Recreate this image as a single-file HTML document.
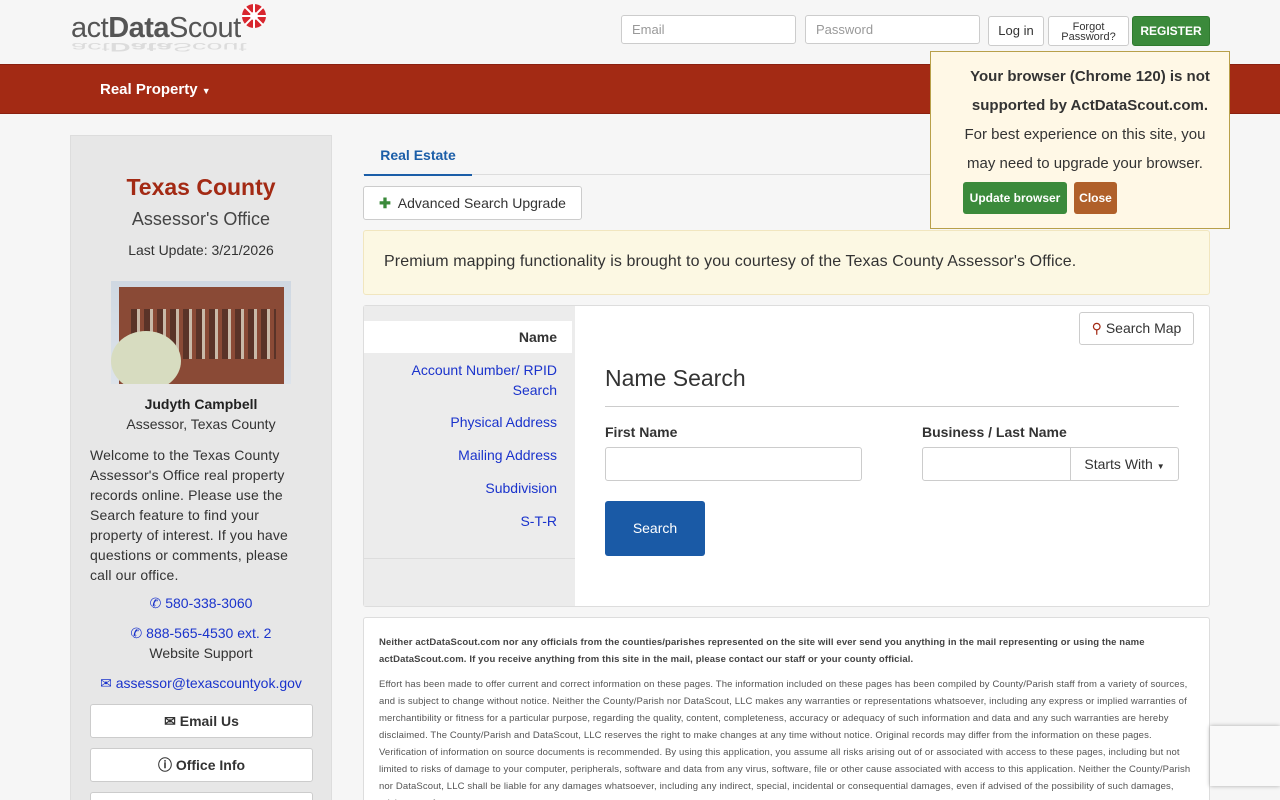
<!DOCTYPE html>
<html><head><meta charset="utf-8"><style>
*{box-sizing:border-box}
html,body{margin:0;width:1280px;height:800px;overflow:hidden}
body{background:#f6f6f6;font-family:"Liberation Sans",sans-serif;color:#333;font-size:14px;position:relative}
.abs{position:absolute}
input.f{position:absolute;height:29px;border:1px solid #ccc;border-radius:3px;background:#fff;font-size:13px;color:#999;padding:0 10px;line-height:27px}
.btn{position:absolute;border:1px solid #ccc;border-radius:3px;background:#fff;text-align:center;font-size:13px;color:#333}
a{color:#1a33cc;text-decoration:none}
</style></head><body>
<!-- logo -->
<div class="abs" style="left:71px;top:30px;font-size:29px;color:#ccc;transform:scaleY(-0.4);opacity:.6;line-height:33px">act<b>Data</b>Scout</div>
<div class="abs" style="left:71px;top:12px;font-size:29px;color:#555;letter-spacing:-0.5px;line-height:33px">act<b style="color:#555">Data</b>Scout</div>
<svg class="abs" style="left:240px;top:2px" width="28" height="28" viewBox="0 0 28 28"><g fill="#d8262e"><circle cx="14" cy="14" r="12"/></g><g stroke="#fff" stroke-width="2"><line x1="14" y1="2" x2="14" y2="26"/><line x1="2" y1="14" x2="26" y2="14"/><line x1="5" y1="5" x2="23" y2="23"/><line x1="23" y1="5" x2="5" y2="23"/></g><circle cx="14" cy="14" r="4" fill="#fff"/></svg>
<input class="f" style="left:621px;top:15px;width:175px" value="Email">
<input class="f" style="left:805px;top:15px;width:175px" value="Password">
<div class="btn" style="left:988px;top:16px;width:56px;height:30px;line-height:28px">Log in</div>
<div class="btn" style="left:1048px;top:16px;width:81px;height:30px;font-size:11px;line-height:10px;padding-top:5px">Forgot<br>Password?</div>
<div class="btn" style="left:1132px;top:16px;width:78px;height:30px;line-height:28px;background:#3b8a3b;border-color:#2f7a2f;color:#fff;font-weight:bold;font-size:12px">REGISTER</div>
<!-- navbar -->
<div class="abs" style="left:0;top:64px;width:1280px;height:50px;background:#a32a14;border-top:1px solid #8a2010;border-bottom:1px solid #8a2010"></div>
<div class="abs" style="left:100px;top:81px;color:#fff;font-weight:bold;font-size:15px">Real Property <span style="font-size:9px">▼</span></div>
<!-- sidebar -->
<div class="abs" style="left:70px;top:135px;width:262px;height:700px;background:#e7e7e7;border:1px solid #ddd"></div>
<div class="abs" style="left:70px;top:174px;width:262px;text-align:center;color:#a32a14;font-weight:bold;font-size:23px">Texas County</div>
<div class="abs" style="left:70px;top:209px;width:262px;text-align:center;color:#444;font-size:18px">Assessor's Office</div>
<div class="abs" style="left:70px;top:242px;width:262px;text-align:center;font-size:14px">Last Update: 3/21/2026</div>
<div class="abs" style="left:111px;top:281px;width:180px;height:103px;background:linear-gradient(#cfd8e2,#dde3ea);overflow:hidden">
<div class="abs" style="left:8px;top:6px;width:165px;height:97px;background:#8a4a36"></div>
<div class="abs" style="left:20px;top:28px;width:145px;height:50px;background:repeating-linear-gradient(90deg,#5a3328 0 6px,#c9b9a8 6px 9px,#8a4a36 9px 13px)"></div>
<div class="abs" style="left:0;top:50px;width:70px;height:60px;border-radius:50%;background:#d7dcc0"></div>
</div>
<div class="abs" style="left:70px;top:396px;width:262px;text-align:center;font-weight:bold;font-size:14px;color:#222">Judyth Campbell</div>
<div class="abs" style="left:70px;top:416px;width:262px;text-align:center;font-size:14px">Assessor, Texas County</div>
<div class="abs" style="left:90px;top:445px;width:212px;font-size:14px;line-height:20px;letter-spacing:0.15px">Welcome to the Texas County Assessor's Office real property records online. Please use the Search feature to find your property of interest. If you have questions or comments, please call our office.</div>
<div class="abs" style="left:70px;top:595px;width:262px;text-align:center"><a>✆ 580-338-3060</a></div>
<div class="abs" style="left:70px;top:625px;width:262px;text-align:center"><a>✆ 888-565-4530 ext. 2</a></div>
<div class="abs" style="left:70px;top:645px;width:262px;text-align:center">Website Support</div>
<div class="abs" style="left:70px;top:675px;width:262px;text-align:center"><a>✉ assessor@texascountyok.gov</a></div>
<div class="btn" style="left:90px;top:704px;width:223px;height:34px;line-height:32px;font-weight:bold;font-size:14px">✉ Email Us</div>
<div class="btn" style="left:90px;top:748px;width:223px;height:34px;line-height:32px;font-weight:bold;font-size:14px">ⓘ Office Info</div>
<div class="btn" style="left:90px;top:792px;width:223px;height:34px"></div>
<!-- tabs -->
<div class="abs" style="left:363px;top:174px;width:847px;border-bottom:1px solid #ddd"></div>
<div class="abs" style="left:364px;top:138px;width:108px;height:38px;border-bottom:2px solid #1b5ea8;color:#1b5ea8;font-weight:bold;text-align:center;line-height:34px">Real Estate</div>
<div class="btn" style="left:363px;top:186px;width:219px;height:34px;line-height:32px;font-size:14px"><span style="color:#3b8a3b;font-weight:bold">✚</span>&nbsp; Advanced Search Upgrade</div>
<div class="abs" style="left:363px;top:230px;width:847px;height:65px;background:#fcf8e3;border:1px solid #f1e6bf;border-radius:3px;font-size:16px;padding:22px 20px;color:#333;letter-spacing:0.1px">Premium mapping functionality is brought to you courtesy of the Texas County Assessor's Office.</div>
<!-- search panel -->
<div class="abs" style="left:363px;top:305px;width:847px;height:302px;background:#fff;border:1px solid #ddd;border-radius:3px"></div>
<div class="abs" style="left:364px;top:306px;width:211px;height:300px;background:#ececec"></div>
<div class="abs" style="left:364px;top:558px;width:211px;border-top:1px solid #ddd"></div>
<div class="abs" style="left:364px;top:321px;width:208px;height:32px;background:#fff;text-align:right;padding-right:15px;line-height:32px;font-weight:bold">Name</div>
<div class="abs" style="left:384px;top:360px;width:173px;text-align:right;line-height:20px"><a>Account Number/ RPID Search</a></div>
<div class="abs" style="left:364px;top:414px;width:193px;text-align:right"><a>Physical Address</a></div>
<div class="abs" style="left:364px;top:447px;width:193px;text-align:right"><a>Mailing Address</a></div>
<div class="abs" style="left:364px;top:480px;width:193px;text-align:right"><a>Subdivision</a></div>
<div class="abs" style="left:364px;top:513px;width:193px;text-align:right"><a>S-T-R</a></div>
<div class="btn" style="left:1079px;top:312px;width:115px;height:33px;line-height:31px;font-size:14px"><span style="color:#a32a14">⚲</span> Search Map</div>
<div class="abs" style="left:605px;top:365px;font-size:23px;color:#333">Name Search</div>
<div class="abs" style="left:605px;top:406px;width:574px;border-top:1px solid #ccc"></div>
<div class="abs" style="left:605px;top:424px;font-weight:bold;font-size:14px">First Name</div>
<div class="abs" style="left:922px;top:424px;font-weight:bold;font-size:14px">Business / Last Name</div>
<div class="abs" style="left:605px;top:447px;width:257px;height:34px;border:1px solid #ccc;border-radius:3px;background:#fff"></div>
<div class="abs" style="left:922px;top:447px;width:149px;height:34px;border:1px solid #ccc;border-radius:3px 0 0 3px;background:#fff"></div>
<div class="abs" style="left:1070px;top:447px;width:109px;height:34px;border:1px solid #ccc;border-radius:0 3px 3px 0;background:#fff;line-height:32px;text-align:center">Starts With <span style="font-size:8px">▼</span></div>
<div class="abs" style="left:605px;top:501px;width:100px;height:55px;background:#1a5aa6;border-radius:3px;color:#fff;text-align:center;line-height:55px">Search</div>
<!-- disclaimer -->
<div class="abs" style="left:363px;top:617px;width:847px;height:200px;background:#fff;border:1px solid #ddd;border-radius:3px;padding:16px 15px;font-size:9.5px;line-height:17px;color:#555;letter-spacing:0.12px">
<div style="font-weight:bold;color:#444">Neither actDataScout.com nor any officials from the counties/parishes represented on the site will ever send you anything in the mail representing or using the name actDataScout.com. If you receive anything from this site in the mail, please contact our staff or your county official.</div>
<div style="margin-top:8px">Effort has been made to offer current and correct information on these pages. The information included on these pages has been compiled by County/Parish staff from a variety of sources, and is subject to change without notice. Neither the County/Parish nor DataScout, LLC makes any warranties or representations whatsoever, including any express or implied warranties of merchantibility or fitness for a particular purpose, regarding the quality, content, completeness, accuracy or adequacy of such information and data and any such warranties are hereby disclaimed. The County/Parish and DataScout, LLC reserves the right to make changes at any time without notice. Original records may differ from the information on these pages. Verification of information on source documents is recommended. By using this application, you assume all risks arising out of or associated with access to these pages, including but not limited to risks of damage to your computer, peripherals, software and data from any virus, software, file or other cause associated with access to this application. Neither the County/Parish nor DataScout, LLC shall be liable for any damages whatsoever, including any indirect, special, incidental or consequential damages, even if advised of the possibility of such damages, arising out of any cause</div>
</div>
<div class="abs" style="left:1210px;top:726px;width:70px;height:60px;background:#f9f9f9;box-shadow:0 0 4px #aaa"></div>
<!-- browser popup -->
<div class="abs" style="left:930px;top:51px;width:300px;height:178px;background:#fff8e6;border:1px solid #b8a04a;text-align:center;font-size:15px;line-height:29px;padding-top:10px;color:#333">
<div style="font-weight:bold;padding-left:20px">Your browser (Chrome 120) is not<br>supported by ActDataScout.com.</div>
<div style="padding-left:10px">For best experience on this site, you<br>may need to upgrade your browser.</div>
</div>
<div class="abs" style="left:963px;top:182px;width:104px;height:32px;background:#3b8a3b;border-radius:3px;color:#fff;font-weight:bold;font-size:12px;line-height:32px;text-align:center">Update browser</div>
<div class="abs" style="left:1074px;top:182px;width:43px;height:32px;background:#b0602a;border-radius:3px;color:#fff;font-weight:bold;font-size:12px;line-height:32px;text-align:center">Close</div>
</body></html>
